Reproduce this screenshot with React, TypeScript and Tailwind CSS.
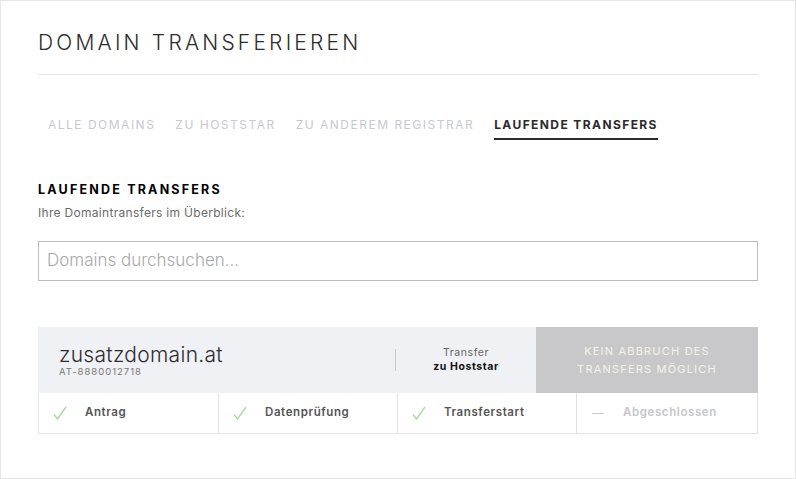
import React from 'react';

const tabs = [
    { label: 'Alle Domains', active: false },
    { label: 'Zu Hoststar', active: false },
    { label: 'Zu anderem Registrar', active: false },
    { label: 'Laufende Transfers', active: true },
];

const steps = [
    { label: 'Antrag', done: true },
    { label: 'Datenprüfung', done: true },
    { label: 'Transferstart', done: true },
    { label: 'Abgeschlossen', done: false },
];

function Check() {
    return (
        <svg width="14" height="14" viewBox="0 0 14 14" fill="none">
            <path d="M1 8.5 L4.5 13 L13 1" stroke="#a6d9a0" strokeWidth="1.3" />
        </svg>
    );
}

export default function App() {
    return (
        <div
            className="w-[796px] h-[479px] bg-white border border-[#e6e6e6] px-[37px] pt-[29px] text-[#333]"
            style={{ fontFamily: 'Inter, "Open Sans", sans-serif' }}
        >
            {/* Title */}
            <h1 className="text-[21px] font-light tracking-[3.2px] uppercase text-[#2d2d2d] leading-[26px]">
                Domain transferieren
            </h1>
            <div className="mt-[18px] border-t border-[#e5e5e5]" />

            {/* Tabs */}
            <div className="flex gap-[20px] pl-[10px] mt-[41px]">
                {tabs.map((tab) => (
                    <div
                        key={tab.label}
                        className={
                            tab.active
                                ? 'text-[12px] uppercase tracking-[1.4px] font-bold text-[#2b2b2b] pb-[4px] border-b-2 border-[#2b2b2b]'
                                : 'text-[12px] uppercase tracking-[1.5px] text-[#c8c8d2] pb-[4px]'
                        }
                    >
                        {tab.label}
                    </div>
                ))}
            </div>

            {/* Section heading */}
            <h2 className="mt-[42px] text-[12.5px] font-bold uppercase tracking-[2.2px] text-black leading-[16px]">
                Laufende Transfers
            </h2>
            <p className="mt-[8px] text-[12px] tracking-[0.3px] text-[#6b6b6b] leading-[14px]">
                Ihre Domaintransfers im Überblick:
            </p>

            {/* Search */}
            <div className="mt-[21px] h-[40px] border border-[#bcbcbc] flex items-center px-[8px]">
                <span className="text-[17px] font-light text-[#a8a8a8]">Domains durchsuchen...</span>
            </div>

            {/* Transfer card */}
            <div className="mt-[46px]">
                <div className="flex h-[66px] bg-[#f0f1f4]">
                    <div className="w-[357px] pl-[21px] flex flex-col justify-center">
                        <div className="text-[21px] font-light tracking-[0.3px] text-[#2d2d2d] leading-[23px]">zusatzdomain.at</div>
                        <div className="text-[9.5px] tracking-[1px] text-[#777] leading-[12px]">AT-8880012718</div>
                    </div>
                    <div className="flex items-center">
                        <div className="w-px h-[22px] bg-[#c9c9c9]" />
                    </div>
                    <div className="w-[140px] flex flex-col items-center justify-center leading-[14px]">
                        <span className="text-[10.5px] tracking-[0.6px] text-[#666]">Transfer</span>
                        <span className="text-[10.5px] font-bold tracking-[0.6px] text-[#111]">zu Hoststar</span>
                    </div>
                    <div className="flex-1 bg-[#c8c8ca] flex flex-col items-center justify-center text-[11px] uppercase tracking-[1.2px] text-[#f6f2e8] leading-[18px]">
                        <span>Kein Abbruch des</span>
                        <span>Transfers möglich</span>
                    </div>
                </div>
                <div className="grid grid-cols-[179px_179px_179px_1fr] h-[41px] border border-t-0 border-[#e3e3e3]">
                    {steps.map((step, i) => (
                        <div
                            key={step.label}
                            className={`flex items-center pl-[14px] gap-[18px] ${i > 0 ? 'border-l border-[#e3e3e3]' : ''}`}
                        >
                            {step.done ? (
                                <Check />
                            ) : (
                                <div className="w-[14px] flex justify-center">
                                    <div className="w-[12px] h-px bg-[#c8c8c8]" />
                                </div>
                            )}
                            <span
                                className={`text-[11.5px] font-semibold tracking-[0.6px] ${step.done ? 'text-[#555]' : 'text-[#c6c6cc]'}`}
                            >
                                {step.label}
                            </span>
                        </div>
                    ))}
                </div>
            </div>
        </div>
    );
}
